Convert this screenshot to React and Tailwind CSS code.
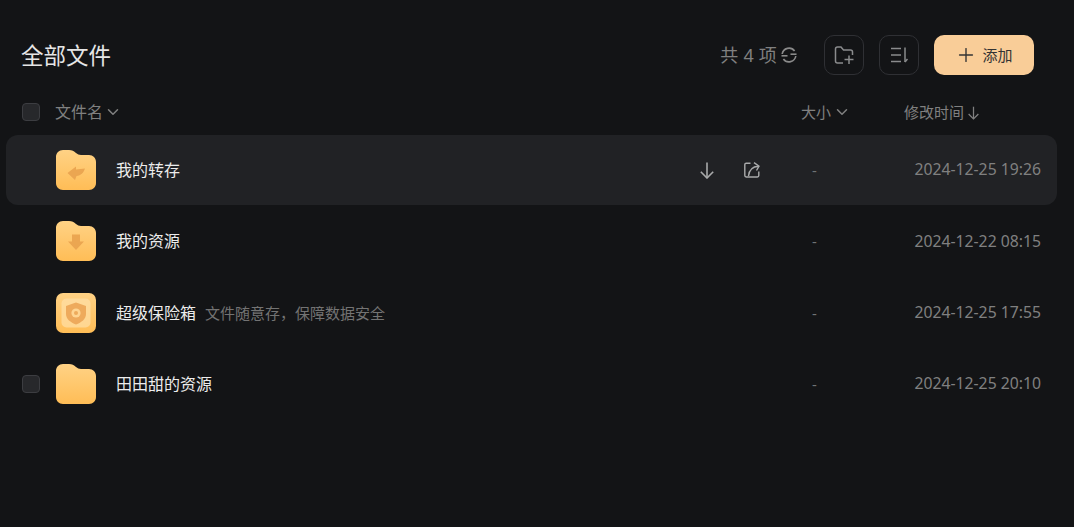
import React from 'react';
import { ChevronDown, Plus } from 'lucide-react';

const files = [
    { name: '我的转存', type: 'transfer', size: '-', time: '2024-12-25 19:26', active: true },
    { name: '我的资源', type: 'download', size: '-', time: '2024-12-22 08:15' },
    { name: '超级保险箱', type: 'safe', size: '-', time: '2024-12-25 17:55', note: '文件随意存，保障数据安全' },
    { name: '田田甜的资源', type: 'plain', size: '-', time: '2024-12-25 20:10', checkbox: true },
];

const Checkbox = () => (
    <span className="block w-[18px] h-[18px] rounded-[4px] border border-[#3c3d41] bg-[#27282b]" />
);

const FileIcon = ({ type, id }) => {
    if (type === 'safe') {
        return (
            <svg width="40" height="40" viewBox="0 0 40 40" fill="none">
                <defs>
                    <linearGradient id={id} x1="0" y1="0" x2="0" y2="1">
                        <stop offset="0" stopColor="#ffd285" />
                        <stop offset="1" stopColor="#ffbd56" />
                    </linearGradient>
                </defs>
                <rect width="40" height="40" rx="7" fill={`url(#${id})`} />
                <rect x="5.5" y="5.5" width="29" height="29" rx="5" fill="#ffdfa8" fillOpacity="0.7" />
                <path d="M20 9.5 L30 13 V21 C30 26 25.5 29.5 20 31.5 C14.5 29.5 10 26 10 21 V13 Z" fill="#eeaa5c" />
                <circle cx="20" cy="20" r="4.6" fill="#ffd592" />
                <circle cx="20" cy="20" r="2" fill="#eeaa5c" />
            </svg>
        );
    }
    return (
        <svg width="40" height="40" viewBox="0 0 40 40" fill="none">
            <defs>
                <linearGradient id={id} x1="0" y1="0" x2="0" y2="1">
                    <stop offset="0" stopColor="#ffd285" />
                    <stop offset="1" stopColor="#ffbd56" />
                </linearGradient>
            </defs>
            <path
                d="M0 7 C0 3 3 0 7 0 H13 C16 0 18 1 20 3 C21.5 4.2 23 5 25 5 H33 C37 5 40 8 40 12 V33 C40 37 37 40 33 40 H7 C3 40 0 37 0 33 Z"
                fill={`url(#${id})`}
            />
            {type === 'download' && (
                <path d="M16 13.5 H24 V20.5 H28 L20 29 L12 20.5 H16 Z" fill="#eba651" />
            )}
            {type === 'transfer' && (
                <path d="M11.5 23 L20 16.5 V19.5 L29 18.5 C27.5 23 25 25.5 20.5 26 L19 30 Z" fill="#eba651" />
            )}
        </svg>
    );
};

const RefreshIcon = () => (
    <svg width="16" height="16" viewBox="0 0 16 16" fill="none" stroke="#8a8a8a" strokeWidth="1.6">
        <path d="M1.2 7 A6.9 6.9 0 0 1 13.6 4" />
        <path d="M14.8 9 A6.9 6.9 0 0 1 2.4 12" />
        <path d="M9.5 7.2 H15.5" />
        <path d="M0.5 8.8 H6.5" />
    </svg>
);

const NewFolderIcon = () => (
    <svg width="20" height="20" viewBox="0 0 20 20" fill="none" stroke="#8a8b8d" strokeWidth="1.5">
        <path d="M9 18 H3.5 C2.2 18 1.5 17.2 1.5 16 V4 C1.5 2.8 2.2 2 3.5 2 H7 L9.5 5 H16.5 C17.8 5 18.5 5.8 18.5 7 V10" />
        <path d="M10.5 14.5 H19.5" />
        <path d="M15 10.5 V19" />
    </svg>
);

const SortIcon = () => (
    <svg width="18" height="18" viewBox="0 0 18 18" fill="none" stroke="#8a8b8d" strokeWidth="1.5">
        <path d="M1 2.5 H11" />
        <path d="M1 9 H11" />
        <path d="M1 15.5 H11" />
        <path d="M15 1.5 V16" />
        <path d="M15 16 L17.5 13" />
    </svg>
);

const ShareIcon = () => (
    <svg width="16" height="16" viewBox="0 0 16 16" fill="none" stroke="#a9aaab" strokeWidth="1.4">
        <path d="M6.5 1.2 H2.2 C1.4 1.2 0.8 1.8 0.8 2.6 V13.6 C0.8 14.4 1.4 15 2.2 15 H13.4 C14.2 15 14.8 14.4 14.8 13.6 V9.5" />
        <path d="M4.5 14 C5 9 8 4.6 14.5 4.2" />
        <path d="M10 0.6 L15 4.2 L12.5 8.5" />
    </svg>
);

const LongArrow = ({ w, h, color }) => (
    <svg width={w} height={h} viewBox="0 0 14 17" fill="none" stroke={color} strokeWidth="1.6">
        <path d="M7 0.5 V16" />
        <path d="M0.8 9.8 L7 16 L13.2 9.8" />
    </svg>
);

const App = () => {
    return (
        <div
            className="w-[1074px] h-[527px] overflow-hidden bg-[#131416] pt-[35px]"
            style={{ fontFamily: '"Noto Sans", "Noto Sans CJK SC", sans-serif' }}
        >
            <div className="flex items-center h-10 pl-[21px] pr-10">
                <h1 className="flex-1 pt-[2px] text-[22.5px] leading-10 font-normal text-[#e6e6e6]">全部文件</h1>
                <div className="flex items-center gap-1 text-[18px] tracking-[0.2px] text-[#808080]">
                    <span>共 4 项</span>
                    <RefreshIcon />
                </div>
                <button className="flex items-center justify-center w-10 h-10 ml-[27px] rounded-[10px] border border-[#2f3034]">
                    <NewFolderIcon />
                </button>
                <button className="flex items-center justify-center w-10 h-10 ml-[15px] rounded-[10px] border border-[#2f3034]">
                    <SortIcon />
                </button>
                <button className="flex items-center justify-center gap-[5px] w-[100px] h-10 ml-[15px] rounded-[10px] bg-[#f9cd98] text-[15px] text-[#333333]">
                    <Plus size={22} strokeWidth={1.5} />
                    添加
                </button>
            </div>

            <div className="flex items-center h-[38px] mt-[18px] mb-[4px] pl-[22px] pr-[33px] text-[15px] text-[#808080]">
                <Checkbox />
                <div className="flex flex-1 items-center ml-[15px] text-[16px]">
                    文件名
                    <ChevronDown size={18} className="ml-[1px]" />
                </div>
                <div className="flex items-center w-[103px]">
                    大小
                    <ChevronDown size={18} className="ml-[2px]" />
                </div>
                <div className="flex items-center w-[137px]">
                    修改时间
                    <span className="ml-[4px] mt-[2px]">
                        <LongArrow w={11} h={14} color="#808080" />
                    </span>
                </div>
            </div>

            <div className="flex flex-col gap-[1.4px] mx-[6px] w-[1051px]">
                {files.map((file, i) => (
                    <div
                        key={file.name}
                        className={`flex items-center h-[70px] pl-4 pr-4 rounded-xl ${file.active ? 'bg-[#212225]' : ''}`}
                    >
                        <div className="w-[18px]">{file.checkbox && <Checkbox />}</div>
                        <div className="ml-4">
                            <FileIcon type={file.type} id={`folder-${i}`} />
                        </div>
                        <div className="flex flex-1 items-center ml-5">
                            <span className="text-[16px] text-[#ececec]">{file.name}</span>
                            {file.note && <span className="ml-[9px] text-[15px] text-[#737373]">{file.note}</span>}
                        </div>
                        {file.active && (
                            <div className="flex items-center gap-[30px] mr-[41px]">
                                <LongArrow w={14} h={17} color="#a9aaab" />
                                <ShareIcon />
                            </div>
                        )}
                        <div className="w-[103px] pl-[11px] text-[15px] text-[#6f7375]">{file.size}</div>
                        <div className="w-[137px] text-right text-[15.75px] text-[#808080]">{file.time}</div>
                    </div>
                ))}
            </div>
        </div>
    );
};

export default App;
